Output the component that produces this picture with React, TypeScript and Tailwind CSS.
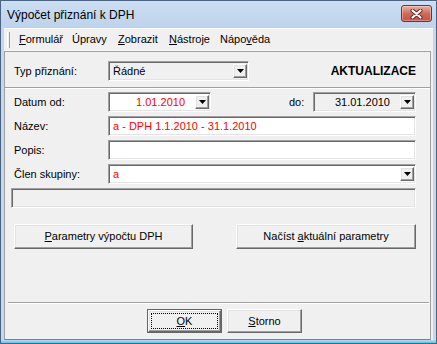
import React from "react";

const sunken =
  "border border-t-[#a0a0a0] border-l-[#a0a0a0] border-r-white border-b-white shadow-[inset_1px_1px_0_#696969,inset_-1px_-1px_0_#e3e3e3]";
const raised =
  "border border-t-white border-l-white border-r-[#696969] border-b-[#696969] shadow-[inset_-1px_-1px_0_#a0a0a0,inset_1px_1px_0_#e3e3e3] bg-[#f0f0f0]";

function DDButton() {
  return (
    <div className={`w-[14px] h-[14px] shrink-0 flex items-center justify-center ${raised}`}>
      <svg width="7" height="4" viewBox="0 0 7 4">
        <path d="M0 0H7L3.5 4Z" fill="#000" />
      </svg>
    </div>
  );
}

function Label({ children }: { children: React.ReactNode }) {
  return <div className="w-[94px] shrink-0">{children}</div>;
}

export default function App() {
  return (
    <div className="w-[437px] h-[344px] bg-[#c3d8ee] border border-[#4c6484] flex flex-col font-['Liberation_Sans',Arial,sans-serif] text-[11px] text-black leading-none select-none">
      {/* Title bar */}
      <div className="h-[27px] shrink-0 flex items-start bg-gradient-to-b from-[#cbdef2] to-[#bdd3ec]">
        <div className="pl-[6px] pt-[8px] text-[12px] text-black">Výpočet přiznání k DPH</div>
        <div className="flex-1" />
        <div className="mt-[4px] mr-[4px] w-[31px] h-[17px] rounded-[3px] border border-[#7a2e26] bg-gradient-to-b from-[#eab0a4] via-[#d26a5c] to-[#c9503f] shadow-[inset_0_0_0_1px_rgba(255,255,255,0.35)] flex items-center justify-center">
          <svg width="13" height="10" viewBox="0 0 13 10">
            <path d="M2.5 1.5L10.5 8.5M10.5 1.5L2.5 8.5" stroke="#5b2620" strokeWidth="4" strokeLinecap="round" />
            <path d="M2.5 1.5L10.5 8.5M10.5 1.5L2.5 8.5" stroke="#ffffff" strokeWidth="2.2" strokeLinecap="round" />
          </svg>
        </div>
      </div>

      {/* Client area */}
      <div className="mx-[3px] flex-1 bg-[#f0f0f0] flex flex-col">
        {/* Menu bar */}
        <div className="h-[23px] shrink-0 flex items-center border-t border-t-white border-b border-b-[#f8f8f8]">
          <div className="ml-[3px] w-[3px] h-[16px] border-l border-l-white border-r border-r-[#a0a0a0]" />
          <div className="ml-[9px] flex items-center">
            <div className="w-[53px]"><span className="underline">F</span>ormulář</div>
            <div className="w-[46px]">Úpravy</div>
            <div className="w-[51px]"><span className="underline">Z</span>obrazit</div>
            <div className="w-[51px]"><span className="underline">N</span>ástroje</div>
            <div>Nápo<span className="underline">v</span>ěda</div>
          </div>
        </div>

        {/* Panel */}
        <div className="flex-1 flex flex-col border-t border-l border-t-[#a0a0a0] border-l-[#a0a0a0] border-r border-r-[#a0a0a0] border-b border-b-[#808080] mr-[2px]">
          {/* Typ row */}
          <div className="pl-[9px] pr-[14px] pt-[9px]">
            <div className="h-[20px] flex items-center">
              <Label>Typ přiznání:</Label>
              <div className={`w-[141px] h-[20px] bg-[#f0f0f0] flex items-center pl-[4px] pr-[1px] ${sunken}`}>
                <div className="flex-1">Řádné</div>
                <DDButton />
              </div>
              <div className="flex-1" />
              <div className="font-bold text-[12px]">AKTUALIZACE</div>
            </div>
          </div>

          {/* Separator */}
          <div className="mt-[6px] h-[2px] border-t border-t-[#a0a0a0] border-b border-b-white" />

          <div className="pl-[9px] pr-[14px] pt-[3px] flex flex-col gap-[4px]">
            {/* Datum row */}
            <div className="h-[20px] flex items-center">
              <Label>Datum od:</Label>
              <div className={`w-[103px] h-[20px] bg-white flex items-center pl-[4px] pr-[1px] ${sunken}`}>
                <div className="flex-1 text-right pr-[10px] text-[#ff0000]">1.01.2010</div>
                <DDButton />
              </div>
              <div className="flex-1" />
              <div className="w-[24px]">do:</div>
              <div className={`w-[103px] h-[20px] bg-[#f0f0f0] flex items-center pl-[4px] pr-[1px] ${sunken}`}>
                <div className="flex-1 text-right pr-[10px]">31.01.2010</div>
                <DDButton />
              </div>
            </div>

            {/* Název */}
            <div className="h-[20px] flex items-center">
              <Label>Název:</Label>
              <div className={`flex-1 h-[20px] bg-white flex items-center pl-[4px] text-[#ff0000] ${sunken}`}>
                a - DPH 1.1.2010 - 31.1.2010
              </div>
            </div>

            {/* Popis */}
            <div className="h-[20px] flex items-center">
              <Label>Popis:</Label>
              <div className={`flex-1 h-[20px] bg-white ${sunken}`} />
            </div>

            {/* Člen skupiny */}
            <div className="h-[20px] flex items-center">
              <Label>Člen skupiny:</Label>
              <div className={`flex-1 h-[20px] bg-white flex items-center pl-[4px] pr-[1px] ${sunken}`}>
                <div className="flex-1 text-[#ff0000]">a</div>
                <DDButton />
              </div>
            </div>

            {/* Status */}
            <div className={`-ml-[3px] h-[20px] bg-[#f0f0f0] ${sunken}`} />

            {/* Buttons */}
            <div className="mt-[12px] h-[25px] flex items-center justify-between">
              <div className={`w-[179px] h-[25px] flex items-center justify-center ${raised}`}>
                <span className="underline">P</span>arametry výpočtu DPH
              </div>
              <div className={`w-[180px] h-[25px] flex items-center justify-center ${raised}`}>
                Načíst&nbsp;<span className="underline">a</span>ktuální parametry
              </div>
            </div>
          </div>

          {/* Bottom separator */}
          <div className="mt-[53px] ml-[3px] mr-[1px] h-[2px] border-t border-t-[#a0a0a0] border-b border-b-white" />

          {/* OK / Storno */}
          <div className="mt-[5px] pl-[142px] flex gap-[5px]">
            <div className="w-[75px] h-[24px] border border-[#646464] flex">
              <div className={`flex-1 flex p-[2px] ${raised}`}>
                <div className="flex-1 border border-dotted border-black flex items-center justify-center">
                  <span className="underline">O</span>K
                </div>
              </div>
            </div>
            <div className={`w-[75px] h-[24px] flex items-center justify-center ${raised}`}>
              <span className="underline">S</span>torno
            </div>
          </div>
        </div>
      </div>

      {/* Bottom frame */}
      <div className="h-[3px] shrink-0 bg-gradient-to-b from-[#c3d8ee] to-[#4cc4ef]" />
    </div>
  );
}
